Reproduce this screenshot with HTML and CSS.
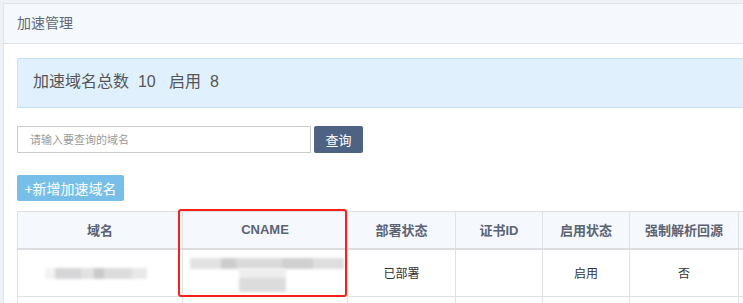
FILE: index.html
```html
<!DOCTYPE html>
<html lang="zh-CN">
<head>
    <meta charset="UTF-8">
    <title>加速管理</title>
    <link rel="stylesheet" href="styles.css">
</head>
<body>
<div class="panel">
    <div class="panel-head">加速管理</div>
    <div class="panel-body">
        <div class="summary">加速域名总数&nbsp; 10 &nbsp;&nbsp;启用&nbsp; 8</div>

        <div class="search">
            <input type="text" class="search-input" placeholder="请输入要查询的域名">
            <button class="btn btn-dark">查询</button>
        </div>

        <button class="btn btn-add">+新增加速域名</button>

        <div class="table-wrap">
            <table class="list">
                <colgroup>
                    <col style="width:165px">
                    <col style="width:165px">
                    <col style="width:108px">
                    <col style="width:87px">
                    <col style="width:87px">
                    <col style="width:109px">
                    <col style="width:120px">
                </colgroup>
                <thead>
                <tr>
                    <th>域名</th>
                    <th>CNAME</th>
                    <th>部署状态</th>
                    <th>证书ID</th>
                    <th>启用状态</th>
                    <th>强制解析回源</th>
                    <th></th>
                </tr>
                </thead>
                <tbody>
                <tr>
                    <td><span class="mosaic mosaic-domain"></span></td>
                    <td class="cname">
                        <span class="mosaic mosaic-cname"></span>
                        <span class="mosaic mosaic-cname2"></span>
                    </td>
                    <td>已部署</td>
                    <td></td>
                    <td>启用</td>
                    <td>否</td>
                    <td></td>
                </tr>
                <tr class="next">
                    <td></td><td></td><td></td><td></td><td></td><td></td><td></td>
                </tr>
                </tbody>
            </table>
            <!--标注框-->
            <div class="mark"></div>
        </div>
    </div>
</div>
</body>
</html>
```

FILE: styles.css
```css
*{
    margin: 0;
    padding: 0;
    box-sizing: border-box;
}

html, body{
    overflow: hidden;
}

body{
    background-color: #eef1f5;
    font-family: "Liberation Sans", "Noto Sans CJK SC", sans-serif;
    color: #333333;
    padding: 3px 0 0 3px;
}

.panel{
    background-color: #ffffff;
    border-left: 1px solid #dfe4ea;
    border-top: 1px solid #dfe4ea;
    height: 300px;
    overflow: hidden;
}

.panel-head{
    height: 40px;
    line-height: 38px;
    padding-left: 13px;
    background-color: #f5f8fc;
    border-bottom: 1px solid #dce1e8;
    font-size: 14px;
    color: #5d6878;
}

.panel-body{
    padding: 14px 0 0 13px;
}

.summary{
    height: 50px;
    line-height: 46px;
    padding-left: 15px;
    background-color: #e0f0fd;
    border: 1px solid #c6e1f6;
    border-right: none;
    font-size: 16px;
    color: #555555;
}

.search{
    display: flex;
    gap: 3px;
    margin-top: 18px;
    height: 27px;
}

.search-input{
    width: 294px;
    height: 27px;
    border: 1px solid #c8cacd;
    padding-left: 12px;
    font-family: inherit;
    font-size: 11px;
    outline: none;
}
.search-input::placeholder{
    color: #9a9a9a;
}

.btn{
    border: none;
    border-radius: 2px;
    color: #ffffff;
    font-family: inherit;
    cursor: pointer;
}

.btn-dark{
    width: 49px;
    height: 27px;
    background-color: #4e6283;
    font-size: 13px;
}

.btn-add{
    display: block;
    margin-top: 22px;
    width: 107px;
    height: 26px;
    background-color: #77bfe9;
    font-size: 14px;
}

.table-wrap{
    position: relative;
    margin-top: 10px;
}

.list{
    table-layout: fixed;
    border-collapse: collapse;
    width: 841px;
}

.list th,
.list td{
    border: 1px solid #dfe1e6;
    text-align: center;
}

.list th{
    height: 37px;
    background-color: #f5f8fc;
    font-size: 13px;
    font-weight: bold;
    color: #5b6474;
    border-bottom: 2px solid #dcdde1;
}

.list td{
    height: 48px;
    font-size: 12px;
    color: #333333;
}

.list tr.next td{
    height: 20px;
}

.cname{
    position: relative;
}

.mosaic{
    display: inline-block;
    filter: blur(1.5px);
    vertical-align: middle;
}

.mosaic-domain{
    width: 102px;
    height: 11px;
    margin-right: 8px;
    background: linear-gradient(90deg, #f3f3f3 0 10%, #d6d6d8 10% 35%, #e2e2e2 35% 48%, #c9c9c9 48% 58%, #dcdcdc 58% 85%, #e8e8e8 85%);
}

.mosaic-cname{
    position: absolute;
    left: 7px;
    top: 8px;
    width: 154px;
    height: 11px;
    background: linear-gradient(90deg, #e2e2e2 0 20%, #cdcdcd 20% 30%, #dadada 30% 60%, #d0d0d0 60% 80%, #dedede 80%);
}

.mosaic-cname2{
    position: absolute;
    left: 56px;
    top: 19px;
    width: 47px;
    height: 23px;
    background: linear-gradient(180deg, #eeeeee 0 40%, #dcdcdc 40%);
}

.mark{
    position: absolute;
    left: 161px;
    top: -2px;
    width: 169px;
    height: 88px;
    border: 2px solid #f5211a;
    border-radius: 3px;
}
```
